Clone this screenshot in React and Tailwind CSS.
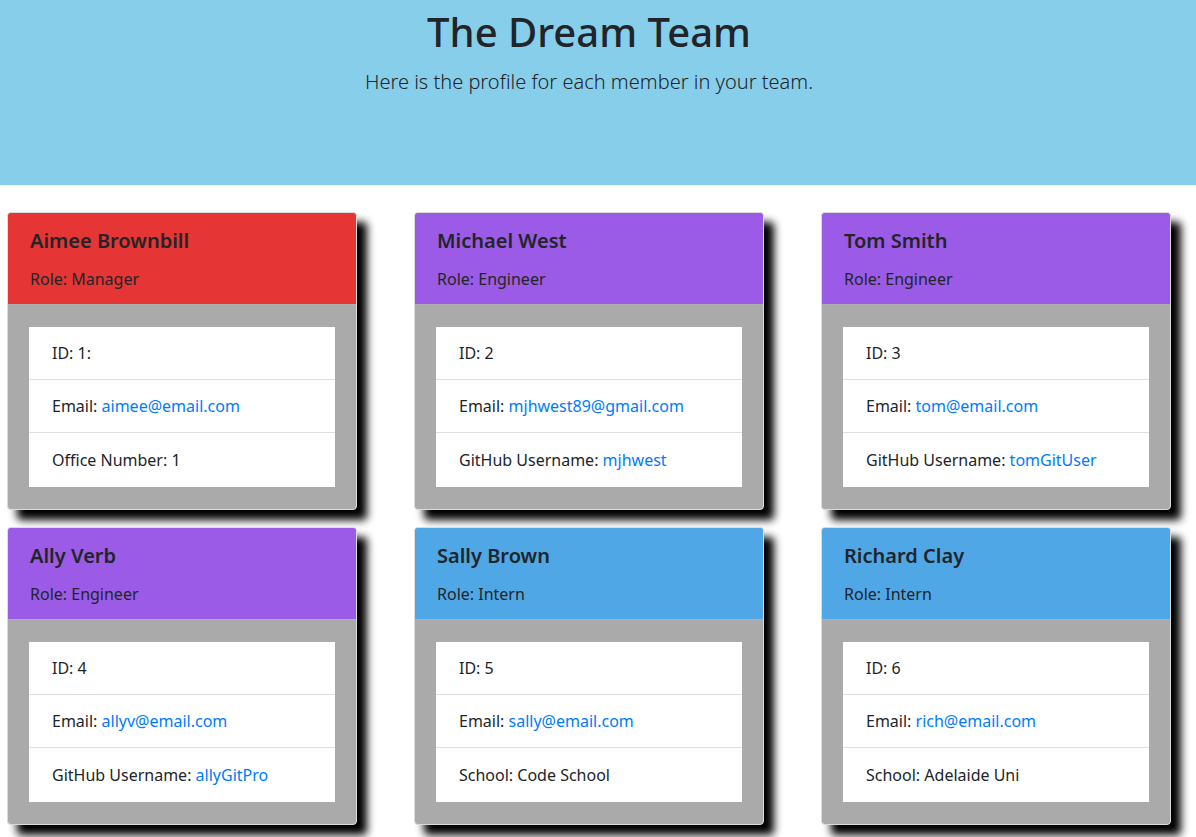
import React from "react";

const members = [
  { name: "Aimee Brownbill", role: "Manager", color: "bg-[#e63535]", id: "1:", email: "aimee@email.com", extraLabel: "Office Number:", extra: "1", extraLink: false },
  { name: "Michael West", role: "Engineer", color: "bg-[#9b5be6]", id: "2", email: "mjhwest89@gmail.com", extraLabel: "GitHub Username:", extra: "mjhwest", extraLink: true },
  { name: "Tom Smith", role: "Engineer", color: "bg-[#9b5be6]", id: "3", email: "tom@email.com", extraLabel: "GitHub Username:", extra: "tomGitUser", extraLink: true },
  { name: "Ally Verb", role: "Engineer", color: "bg-[#9b5be6]", id: "4", email: "allyv@email.com", extraLabel: "GitHub Username:", extra: "allyGitPro", extraLink: true },
  { name: "Sally Brown", role: "Intern", color: "bg-[#4fa7e6]", id: "5", email: "sally@email.com", extraLabel: "School:", extra: "Code School", extraLink: false },
  { name: "Richard Clay", role: "Intern", color: "bg-[#4fa7e6]", id: "6", email: "rich@email.com", extraLabel: "School:", extra: "Adelaide Uni", extraLink: false },
];

function Card({ m }) {
  return (
    <div className="w-[350px] rounded-[4px] border border-[#dcdcdc] bg-[#aaaaaa] shadow-[10px_10px_8px_#000] overflow-hidden">
      <div className={`${m.color} px-[22px] pt-[16px] pb-[13px] border-b border-[#b0b0b0]`}>
        <div className="text-[20px] font-semibold leading-[24px] text-[#212529]">{m.name}</div>
        <div className="mt-[14px] text-[16px] leading-[24px] text-[#212529]">Role: {m.role}</div>
      </div>
      <div className="px-[21px] pt-[22px] pb-[22px]">
        <ul className="bg-white text-[16px] text-[#212529]">
          <li className="h-[53px] flex items-center px-[23px] border-b border-[#dfdfdf]">ID: {m.id}</li>
          <li className="h-[53px] flex items-center px-[23px] border-b border-[#dfdfdf]">
            Email:&nbsp;<a className="text-[#007bff]">{m.email}</a>
          </li>
          <li className="h-[54px] flex items-center px-[23px]">
            {m.extraLabel}&nbsp;{m.extraLink ? <a className="text-[#007bff]">{m.extra}</a> : <span>{m.extra}</span>}
          </li>
        </ul>
      </div>
    </div>
  );
}

export default function App() {
  return (
    <div className="min-h-[837px] bg-white" style={{ fontFamily: '"Noto Sans", "Open Sans", sans-serif' }}>
      <header className="h-[185px] bg-[#87ceeb] flex flex-col items-center pt-[8px] pr-[18px]">
        <h1 className="text-[40px] font-medium leading-[48px] text-[#212529]">The Dream Team</h1>
        <p className="mt-[11px] text-[20px] font-light leading-[30px] text-[#212529]">Here is the profile for each member in your team.</p>
      </header>
      <main className="pl-[7px] pt-[27px] grid grid-cols-[350px_350px_350px] gap-x-[57px] gap-y-[17px]">
        {members.map((m) => (
          <Card key={m.name} m={m} />
        ))}
      </main>
    </div>
  );
}
